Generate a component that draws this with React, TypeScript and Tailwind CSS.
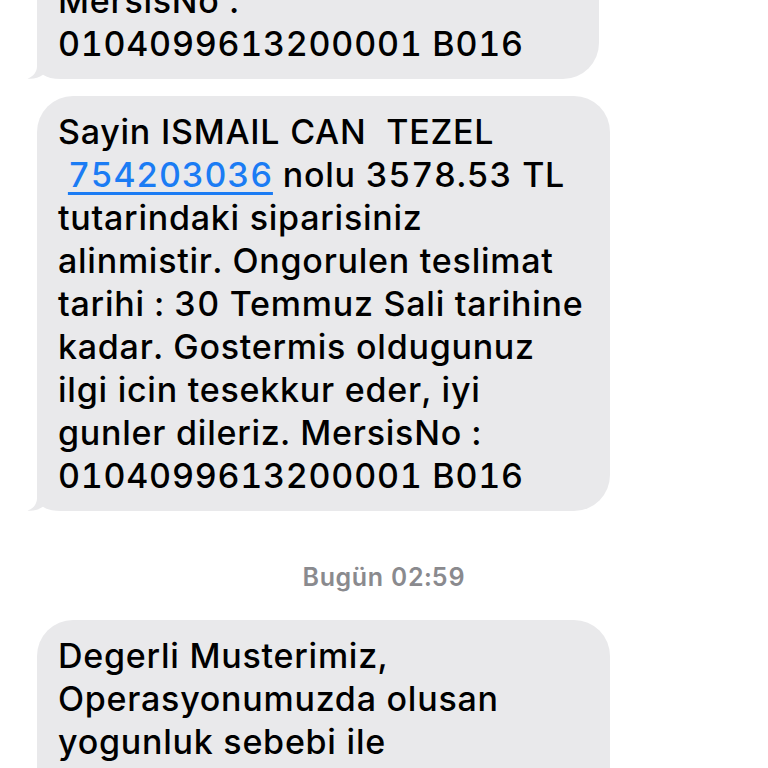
import { ReactNode } from "react";

const font = { fontFamily: "Inter, 'Noto Sans', sans-serif" };

// received-message tail, drawn over the bubble's bottom-left corner
const Tail = () => (
  <svg
    className="absolute left-[-12px] bottom-0"
    width="44"
    height="40"
    viewBox="0 0 44 40"
  >
    <path
      d="M12 0 L12 27 C12 33 8.5 37.5 2.5 39.6 C8 40.4 13.5 38.8 18 35.8 C22 38.6 28 40 36 40 L44 40 L44 0 Z"
      fill="#e9e9eb"
    />
  </svg>
);

const Bubble = ({
  width,
  lines,
  tail = false,
}: {
  width: string;
  lines: ReactNode[];
  tail?: boolean;
}) => (
  <div className={`relative ml-[37px] ${width}`}>
    <div className="rounded-[36px] rounded-bl-[28px] bg-[#e9e9eb] pl-[21px] py-[14px]">
      {lines.map((line, i) => (
        <div
          key={i}
          className="relative z-10 h-[43px] whitespace-pre text-[34px] leading-[43px] font-medium text-black tracking-[0.75px] tabular-nums"
          style={font}
        >
          {line}
        </div>
      ))}
    </div>
    {tail && <Tail />}
  </div>
);

const Link = ({ children }: { children: ReactNode }) => (
  <span className="text-[#1b7cf4] underline decoration-[2.5px] underline-offset-[5px]">
    {children}
  </span>
);

export default function App() {
  const firstLines = [
    "Sayin ISMAIL CAN  TEZEL",
    "tutarindaki siparisiniz",
    "alinmistir. Ongorulen teslimat",
    "gunler dileriz. MersisNo :",
    "MersisNo :",
    "0104099613200001 B016",
  ];

  const orderLines: ReactNode[] = [
    "Sayin ISMAIL CAN  TEZEL",
    <>
      {" "}
      <Link>754203036</Link> nolu 3578.53 TL
    </>,
    "tutarindaki siparisiniz",
    "alinmistir. Ongorulen teslimat",
    "tarihi : 30 Temmuz Sali tarihine",
    "kadar. Gostermis oldugunuz",
    "ilgi icin tesekkur eder, iyi",
    "gunler dileriz. MersisNo :",
    "0104099613200001 B016",
  ];

  const lastLines = [
    "Degerli Musterimiz,",
    "Operasyonumuzda olusan",
    "yogunluk sebebi ile",
    "siparisinizin teslimatinda",
  ];

  return (
    <div className="h-[768px] w-[768px] overflow-hidden bg-white flex flex-col">
      <div className="h-[79px] shrink-0 overflow-hidden flex flex-col justify-end">
        <Bubble width="w-[562px]" lines={firstLines} tail />
      </div>

      <div className="mt-[17px] shrink-0">
        <Bubble width="w-[573px]" lines={orderLines} tail />
      </div>

      <div
        className="mt-[51px] h-[30px] shrink-0 text-center text-[25px] leading-[30px] font-semibold text-[#8a8a8e] tracking-[0.6px] tabular-nums"
        style={font}
      >
        Bugün 02:59
      </div>

      <div className="mt-[28px] shrink-0">
        <Bubble width="w-[573px]" lines={lastLines} />
      </div>
    </div>
  );
}
